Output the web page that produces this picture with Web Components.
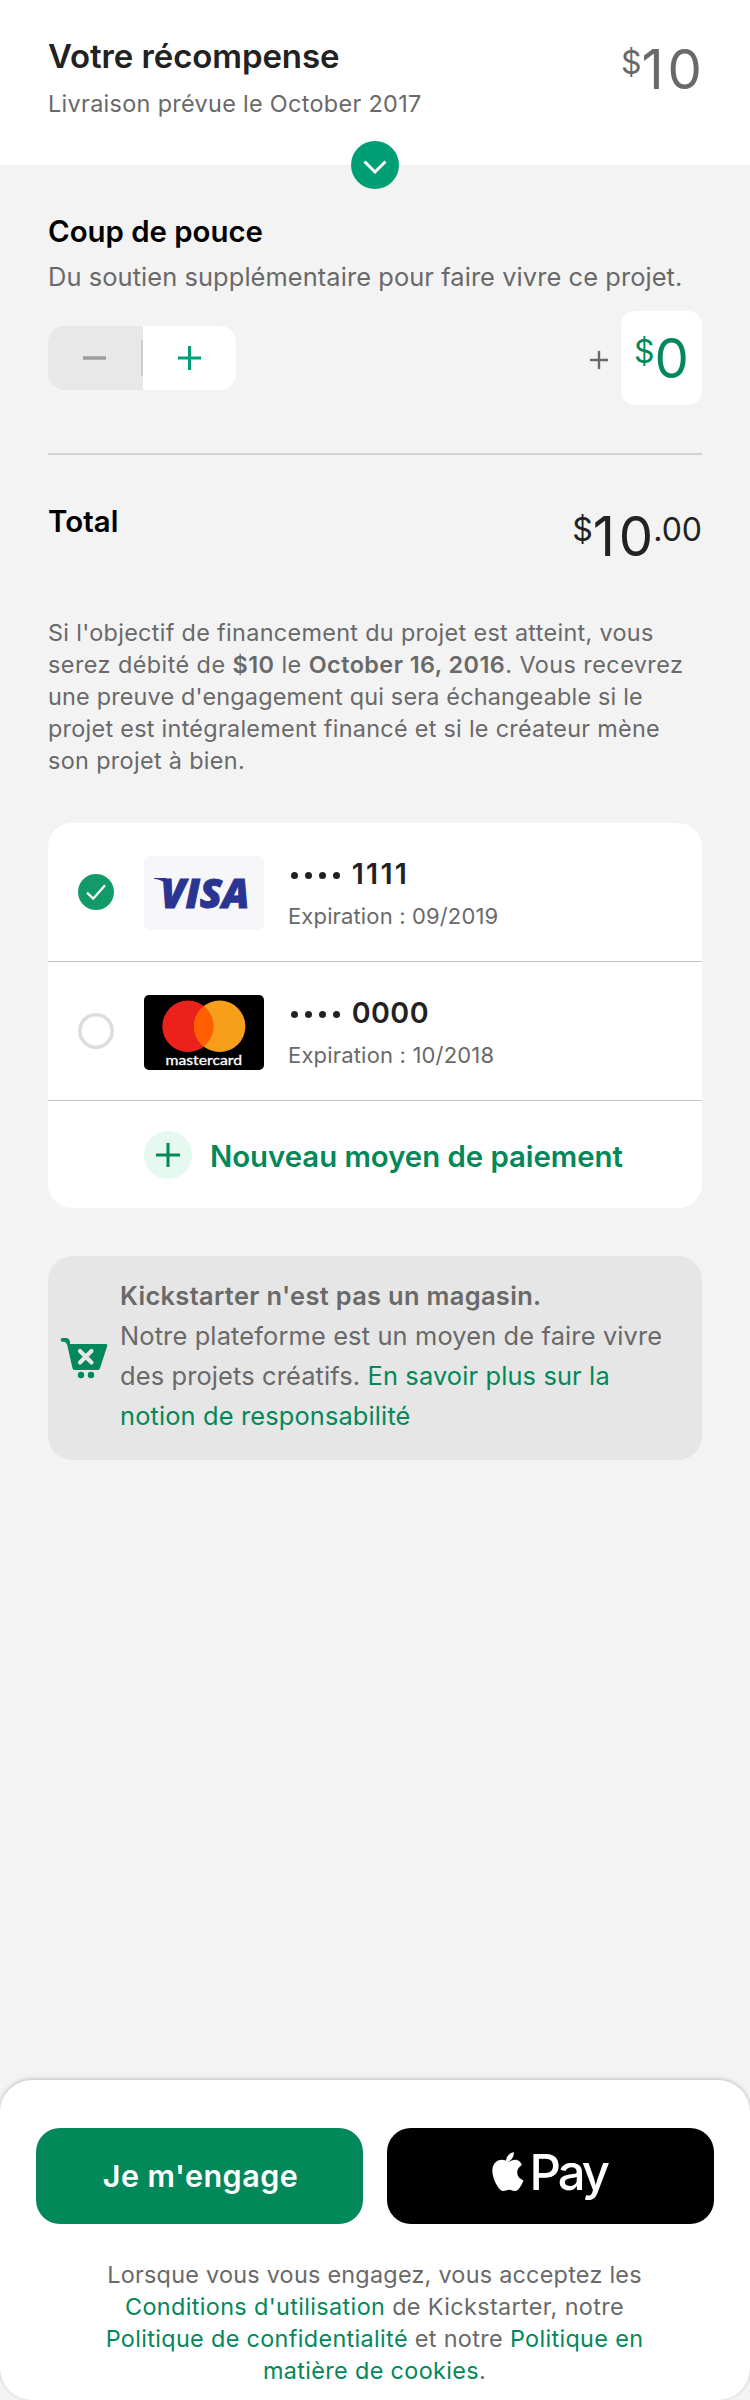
<!DOCTYPE html>
<html lang="fr"><head><meta charset="utf-8"><title>Votre récompense</title>
<style>
body{margin:0;background:#f3f3f3;color:#696969;font-family:Inter,"Liberation Sans",sans-serif;width:750px;height:2400px;overflow:hidden}
</style></head><body>
<pledge-page></pledge-page>
<script>
const define=(name,html,css,setup)=>customElements.define(name,class extends HTMLElement{
  connectedCallback(){
    if(this.shadowRoot)return;
    this.attachShadow({mode:'open'}).innerHTML=`<style>${css}</style>${html}`;
    if(setup)setup(this,this.shadowRoot);
  }
});

// One line of text; size, weight, line and track set its typography.
define('text-run','<slot></slot>',
 ':host{display:block;white-space:nowrap}',
 el=>{
  const a=n=>el.getAttribute(n);
  if(a('size'))el.style.fontSize=a('size')+'px';
  if(a('weight'))el.style.fontWeight=a('weight');
  if(a('track'))el.style.letterSpacing=a('track')+'px';
  if(a('line'))el.style.lineHeight=a('line')+'px';
 });

define('price-tag','<text-run class="sup" size="32">$</text-run><text-run class="main" size="54.5"><slot></slot></text-run><text-run class="sup cents" size="32"><slot name="cents"></slot></text-run>',
 ':host{display:flex;align-items:flex-start;height:60px}.sup{line-height:47px}.main{line-height:60px}:host([wide]) .main{letter-spacing:4px;margin-right:-4px}');

define('pledge-header',`
 <div><text-run class="t" size="33" weight="600" line="40" track="-.094">Votre récompense</text-run>
 <text-run class="s" size="23.4" line="32" track=".323">Livraison prévue le October 2017</text-run></div>
 <price-tag wide>10</price-tag>
 <span class="toggle"><svg width="48" height="48" viewBox="0 0 48 48"><circle cx="24" cy="24" r="24" fill="#009e74"/><path d="M13.500 20.500 24 31l10.500-10.500" fill="none" stroke="#fff" stroke-width="3"/></svg></span>`,
 `:host{display:flex;justify-content:space-between;height:165px;background:#fff;padding:0 48px;box-sizing:border-box;position:relative}
 .t{color:#222;margin-top:36px}.s{margin-top:12px}price-tag{margin-top:39px}
 .toggle{position:absolute;left:351px;top:141px;line-height:0}`);

define('amount-stepper',`<div class="minus"><svg width="94" height="64"><path d="M35 32h23" stroke="#9b9e9e" stroke-width="3.500"/></svg></div><div class="plus"><svg width="94" height="64"><path d="M35 32h23M46.500 20v24" stroke="#009e74" stroke-width="3"/></svg></div><i></i>`,
 `:host{display:flex;width:188px;height:64px;border-radius:16px;overflow:hidden;background:#fff;position:relative}
 div{width:93px;line-height:0}.minus{background:#e8e8e8;width:95px}i{position:absolute;left:93px;top:14px;width:2px;height:36px;background:#cdcdcd}`);

define('bonus-support',`
 <text-run class="t" size="29.400" weight="600" line="36" track="-.023">Coup de pouce</text-run>
 <text-run class="s" size="25.400" line="36" track=".09">Du soutien supplémentaire pour faire vivre ce projet.</text-run>
 <div class="row"><amount-stepper></amount-stepper><div class="amt"><svg width="20" height="20"><path d="M1 10h18M10 1v18" stroke="#696969" stroke-width="2.400"/></svg><div class="box"><price-tag>0</price-tag></div></div></div>`,
 `:host{display:block;height:239px;border-bottom:2px solid #d0d0d0;margin:0 48px;padding:49px 0 0}
 .t{color:#000}.s{margin-top:9px}
 .row,.amt{display:flex;justify-content:space-between;align-items:center}.row{margin-top:16px}.amt{gap:12px}.amt>svg{margin-top:4px}
 .box{width:81px;height:94px;border-radius:14px;background:#fff;color:#03885a;display:flex;justify-content:center;align-items:center}`);

define('total-row',`<text-run size="29.400" weight="600" line="36" track=".1">Total</text-run><price-tag wide>10<span slot="cents">.00</span></price-tag>`,
 ':host{display:flex;justify-content:space-between;color:#222;margin:51px 48px 0}text-run{color:#000;margin-top:-2px}');

define('pledge-note',`
 <text-run track=".319">Si l'objectif de financement du projet est atteint, vous</text-run>
 <text-run track=".449">serez débité de <b>$10</b> le <b>October 16, 2016</b>. Vous recevrez</text-run>
 <text-run track=".193">une preuve d'engagement qui sera échangeable si le</text-run>
 <text-run track=".281">projet est intégralement financé et si le créateur mène</text-run>
 <text-run track=".339">son projet à bien.</text-run>`,
 ':host{display:block;margin:51px 48px 0;font-size:23.400px;line-height:32px}b{font-weight:600}');

define('payment-card',`<span class="radio"></span><span class="logo"><slot name="logo"></slot></span><div>
 <text-run class="n" size="28.600" weight="600" line="36"><span class="dots"><i></i><i></i><i></i><i></i></span><slot name="num"></slot></text-run>
 <text-run class="e" size="22" line="28"><slot name="exp"></slot></text-run></div>`,
 `:host{display:flex;height:138px;border-bottom:1px solid #c4c4c4;padding-left:30px}
 .radio{width:36px;height:36px;margin-top:51px;line-height:0}.logo{margin:33px 24px 0 30px;width:120px;height:75px;line-height:0}
 .n{color:#222;margin-top:33px}.e{margin-top:10px}
 .dots{display:inline-flex;gap:6.800px;margin:0 11.500px 0 3px;vertical-align:5px}i{width:7.200px;height:7.200px;border-radius:50%;background:#222}`,
 (el,r)=>{r.querySelector('.radio').innerHTML=el.hasAttribute('checked')
  ?'<svg width="36" height="36"><circle cx="18" cy="18" r="18" fill="#129b68"/><path d="m9 18.700 6.200 6L27 11.200" fill="none" stroke="#fff" stroke-width="2.300"/></svg>'
  :'<svg width="36" height="36"><circle cx="18" cy="18" r="16.200" fill="none" stroke="#dcdedd" stroke-width="3.600"/></svg>';});

define('visa-logo',`<svg width="120" height="74" viewBox="0 0 120 74"><rect width="120" height="74" rx="5" fill="#f7f7fa"/><text x="16.500" y="51.600" textLength="89" lengthAdjust="spacingAndGlyphs" font-family="Open Sans" font-style="italic" font-weight="800" font-size="41.500" fill="#2a3491" stroke="#2a3491" stroke-width="1">VISA</text><path d="M10 22h12l2 7q-5-5-14-6.200z" fill="#2a3491"/></svg>`,':host{display:block}');
define('mastercard-logo',`<svg width="120" height="75" viewBox="0 0 120 75"><rect width="120" height="75" rx="5" fill="#000"/><circle cx="44" cy="31.300" r="25.700" fill="#eb221c"/><circle cx="75.700" cy="31.300" r="25.700" fill="#f79f1a"/><path d="M59.850 11.070a25.700 25.700 0 0 1 0 40.460a25.700 25.700 0 0 1 0-40.460z" fill="#ff5f00"/><text x="21.500" y="70.300" textLength="76.500" lengthAdjust="spacingAndGlyphs" font-family="Lato" font-size="14.200" fill="#fff" stroke="#fff" stroke-width=".3">mastercard</text></svg>`,':host{display:block}');

define('payment-methods',`
 <payment-card checked><visa-logo slot="logo"></visa-logo><text-run class="i" slot="num" track="2.300">1111</text-run><text-run slot="exp" track=".142">Expiration : 09/2019</text-run></payment-card>
 <payment-card><mastercard-logo slot="logo"></mastercard-logo><text-run class="i" slot="num" track=".47">0000</text-run><text-run slot="exp" track=".179">Expiration : 10/2018</text-run></payment-card>
 <div class="new"><svg width="48" height="48"><circle cx="24" cy="24" r="24" fill="#e5f9f0"/><path d="M12 24h24M24 12v24" stroke="#03885a" stroke-width="3"/></svg><text-run size="29.400" weight="600" line="36" track="-.051">Nouveau moyen de paiement</text-run></div>`,
 `:host{display:block;margin:46px 48px 0;height:385px;border-radius:24px;background:#fff;overflow:hidden}
 .i{display:inline-block}
 .new{display:flex;padding:30px 0 0 96px;color:#03885a;gap:18px}.new text-run{margin-top:8px}`);

define('store-notice',`<svg width="48" height="48" viewBox="60 1336 48 48"><path d="M63 1340h3.500l3 4h36.500q1.800 0 1.300 1.800l-7.300 22.500q-.5 1.700-2 1.700H74.500q-1.500 0-2-1.700L67 1344z" fill="#03885a"/><path d="M62.600 1339.900h3.400q1.700 0 2.200 2.600" stroke="#03885a" stroke-width="3.800" fill="none" stroke-linecap="round"/><path d="m80 1351 11.500 11.500m0-11.500L80 1362.500" stroke="#e6e6e6" stroke-width="4.200" stroke-linecap="round"/><circle cx="81" cy="1375" r="3.200" fill="#03885a"/><circle cx="91" cy="1375" r="3.200" fill="#03885a"/></svg><div>
 <text-run weight="600" track=".338">Kickstarter n'est pas un magasin.</text-run>
 <text-run track=".15">Notre plateforme est un moyen de faire vivre</text-run>
 <text-run track=".14">des projets créatifs. <a>En savoir plus sur la</a></text-run>
 <text-run track=".14"><a>notion de responsabilité</a></text-run></div>`,
 `:host{display:flex;margin:48px 48px 0;height:204px;border-radius:24px;background:#e6e6e6;font-size:25.400px;line-height:40px;box-sizing:border-box;padding:20px 0 0 12px}
 svg{margin-top:60px;flex:none}div{margin-left:12px}a{color:#03885a}`);

define('pledge-footer',`<div class="btns"><div class="go"><text-run size="30.500" weight="600" line="36" track=".482">Je m'engage</text-run></div>
 <div class="apple"><svg width="32" height="40" viewBox="492 2152 32 40"><path d="M513.800 2152.300c.4 3-1 5.500-2.500 7.200-1.400 1.500-3.300 2.400-5.200 2.300-.3-2.700 1-5.100 2.400-6.700 1.400-1.600 3.600-2.700 5.300-2.800zM521.900 2165.100c-3 1.800-4.800 4.300-4.700 7.500.1 3.900 2.600 6.500 6.300 7.900-.8 2.400-2 4.600-3.500 6.700-1.400 2-2.900 3.900-5.100 3.900-2.300 0-3.100-1.300-5.700-1.300-2.700 0-3.600 1.300-5.800 1.300-2.400 0-4.100-2.200-5.500-4.200-5.900-8.600-7.900-20.100-2-24.800 1.700-1.500 3.800-2.300 6-2.300 2.700 0 4.900 1.700 6.700 1.700 1.700 0 4.300-1.800 7.300-1.700 2.700.1 4.600 1.900 6 5.300z" fill="#fff"/></svg><text-run size="49" weight="450" line="60" track="-3">Pay</text-run></div></div>
 <div class="legal"><text-run track=".248">Lorsque vous vous engagez, vous acceptez les</text-run>
 <text-run track=".365"><a>Conditions d'utilisation</a> de Kickstarter, notre</text-run>
 <text-run track=".345"><a>Politique de confidentialité</a> et notre <a>Politique en</a></text-run>
 <text-run track=".352"><a>matière de cookies</a>.</text-run></div>`,
 `:host{display:block;height:320px;background:#fff;border-radius:32px;box-shadow:0 -1px 4px rgba(0,0,0,.22);margin-top:620px;padding:48px 36px 0;box-sizing:border-box}
 .btns{display:flex;gap:24px}.btns>div{flex:none;width:327px;height:96px;box-sizing:border-box;border-radius:24px;background:#03885a;color:#fff;display:flex;justify-content:center;align-items:center}
 .go{padding-left:2px}.btns .apple{background:#000;justify-content:flex-start;padding-left:105px;gap:5.500px}.apple svg{margin-bottom:8px}.apple text-run{margin-bottom:6px}
 .legal{margin-top:35px;margin-right:1px;font-size:23.400px;line-height:32px;display:flex;flex-direction:column;align-items:center}a{color:#03885a}`);

define('pledge-page',`<pledge-header></pledge-header><bonus-support></bonus-support><total-row></total-row><pledge-note></pledge-note><payment-methods></payment-methods><store-notice></store-notice><pledge-footer></pledge-footer>`,':host{display:block}');
</script></body></html>
